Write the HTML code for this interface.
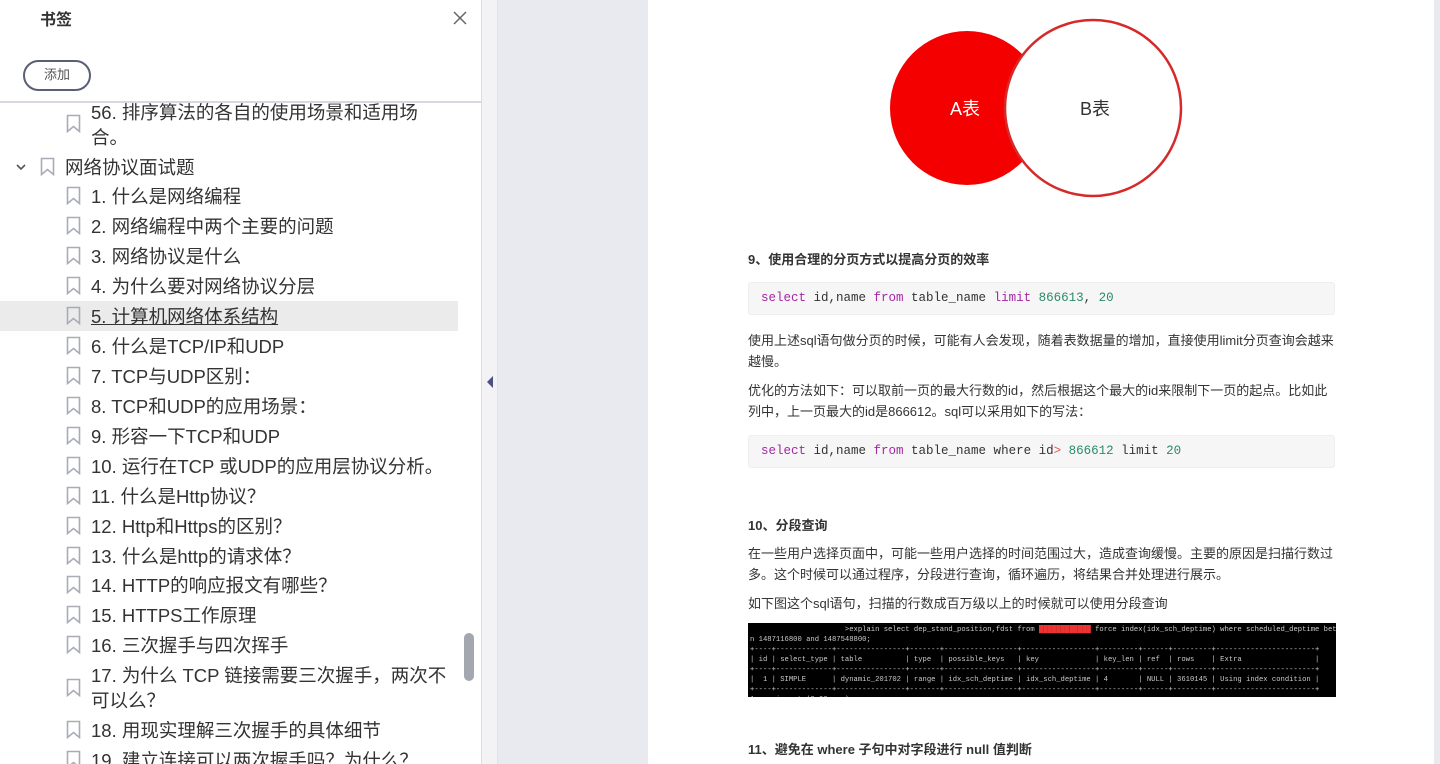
<!DOCTYPE html>
<html><head><meta charset="utf-8"><style>
*{margin:0;padding:0;box-sizing:border-box}
html,body{width:1440px;height:764px;overflow:hidden}
body{position:relative;background:#e9eaef;font-family:"Liberation Sans","Noto Sans CJK SC",sans-serif}
#side{position:absolute;left:0;top:0;width:482px;height:764px;background:#fff;border-right:1px solid #dcdce2}
#strip{position:absolute;left:482px;top:0;width:16px;height:764px;background:#f3f3f5;border-right:1px solid #e2e2e6}
.t{position:absolute;font-size:18.5px;color:#333;white-space:nowrap;line-height:25px}
.bm{position:absolute;width:15px;height:19px}
#page{position:absolute;left:648px;top:0;width:786px;height:764px;background:#fff}
.p{position:absolute;left:100px;font-size:13px;color:#333;line-height:21px}
.h{position:absolute;left:100px;font-size:13px;font-weight:bold;color:#333}
.code{position:absolute;left:100px;width:587px;height:33px;background:#f6f6f7;border:1px solid #eee;border-radius:3px;font-family:"Liberation Mono",monospace;font-size:12.5px;color:#333;padding-left:12px;line-height:31px}
.k{color:#a626a4}.n{color:#2a8a6a}
.term{position:absolute;left:100px;top:623px;width:588px;height:74px;background:#000;color:#ccc;font-family:"Liberation Mono",monospace;font-size:7.2px;line-height:10px;padding:2px 2px;white-space:pre;overflow:hidden}
</style></head><body>
<div id="side">
<div style="position:absolute;left:40px;top:6px;font-size:16px;font-weight:bold;color:#333">书签</div>
<svg style="position:absolute;left:453px;top:11px" width="14" height="14"><path d="M1 1L13 13M13 1L1 13" stroke="#666" stroke-width="1.5"/></svg>
<div style="position:absolute;left:23px;top:60px;width:68px;height:31px;border:2.5px solid #5a5f78;border-radius:16px;font-size:13px;color:#555;text-align:center;line-height:26px">添加</div>
<div style="position:absolute;left:0;top:101px;width:481px;height:2px;background:#d8d8e2"></div>
<div style="position:absolute;left:0;top:301px;width:458px;height:30px;background:#ebebeb"></div>
<div style="position:absolute;left:464px;top:633px;width:10px;height:48px;background:#a5a7b0;border-radius:5px"></div>
<svg style="position:absolute;left:15px;top:162px" width="12" height="10"><path d="M2 3 L6 7 L10 3" stroke="#555" stroke-width="1.6" fill="none"/></svg>
<div id="list"></div>
</div>
<div id="strip"><svg style="position:absolute;left:4px;top:375px" width="8" height="14"><path d="M7 1 L1 7 L7 13Z" fill="#4a5080"/></svg></div>
<div id="page">
<svg style="position:absolute;left:240px;top:15px" width="300" height="190">
<circle cx="79" cy="93" r="77" fill="#f50000"/>
<circle cx="205" cy="93" r="88" fill="#fff" stroke="#d62a2a" stroke-width="2.5"/>
<text x="62" y="100" font-size="18" fill="#fff" font-family="Liberation Sans,Noto Sans CJK SC,sans-serif">A表</text>
<text x="192" y="100" font-size="18" fill="#333" font-family="Liberation Sans,Noto Sans CJK SC,sans-serif">B表</text>
</svg>
<div class="h" style="top:249px">9、使用合理的分页方式以提高分页的效率</div>
<div class="code" style="top:282px"><span class="k">select</span> id,name <span class="k">from</span> table_name <span class="k">limit</span> <span class="n">866613</span>, <span class="n">20</span></div>
<div class="p" style="top:330px;width:590px">使用上述sql语句做分页的时候，可能有人会发现，随着表数据量的增加，直接使用limit分页查询会越来越慢。</div>
<div class="p" style="top:380px;width:590px">优化的方法如下：可以取前一页的最大行数的id，然后根据这个最大的id来限制下一页的起点。比如此列中，上一页最大的id是866612。sql可以采用如下的写法：</div>
<div class="code" style="top:435px"><span class="k">select</span> id,name <span class="k">from</span> table_name where id<span style="color:#e45649">&gt;</span> <span class="n">866612</span> limit <span class="n">20</span></div>
<div class="h" style="top:515px">10、分段查询</div>
<div class="p" style="top:543px;width:590px">在一些用户选择页面中，可能一些用户选择的时间范围过大，造成查询缓慢。主要的原因是扫描行数过多。这个时候可以通过程序，分段进行查询，循环遍历，将结果合并处理进行展示。</div>
<div class="p" style="top:593px">如下图这个sql语句，扫描的行数成百万级以上的时候就可以使用分段查询</div>
<div class="term">                      &gt;explain select dep_stand_position,fdst from <span style="color:#e33">████████████</span> force index(idx_sch_deptime) where scheduled_deptime betwee
n 1487116800 and 1487548800;
+----+-------------+----------------+-------+-----------------+-----------------+---------+------+---------+-----------------------+
| id | select_type | table          | type  | possible_keys   | key             | key_len | ref  | rows    | Extra                 |
+----+-------------+----------------+-------+-----------------+-----------------+---------+------+---------+-----------------------+
|  1 | SIMPLE      | dynamic_201702 | range | idx_sch_deptime | idx_sch_deptime | 4       | NULL | 3610145 | Using index condition |
+----+-------------+----------------+-------+-----------------+-----------------+---------+------+---------+-----------------------+
1 row in set (0.00 sec)</div>
<div class="h" style="top:739px">11、避免在 where 子句中对字段进行 null 值判断</div>
</div>
<script>
var items=[[112,"56. 排序算法的各自的使用场景和适用场",91,124],[137,"合。",91,-1],[167,"网络协议面试题",65,167],
[196,"1. 什么是网络编程"],[226,"2. 网络编程中两个主要的问题"],[256,"3. 网络协议是什么"],[286,"4. 为什么要对网络协议分层"],[316,"5. 计算机网络体系结构"],[346,"6. 什么是TCP/IP和UDP"],[376,"7. TCP与UDP区别："],[406,"8. TCP和UDP的应用场景："],[436,"9. 形容一下TCP和UDP"],[466,"10. 运行在TCP 或UDP的应用层协议分析。"],[496,"11. 什么是Http协议？"],[526,"12. Http和Https的区别？"],[556,"13. 什么是http的请求体？"],[585,"14. HTTP的响应报文有哪些？"],[615,"15. HTTPS工作原理"],[645,"16. 三次握手与四次挥手"],[675,"17. 为什么 TCP 链接需要三次握手，两次不",91,688],[700,"可以么？",91,-1],[730,"18. 用现实理解三次握手的具体细节"],[760,"19. 建立连接可以两次握手吗？为什么？"]];
var h="";
items.forEach(function(it){var x=it[2]||91,ic=it[3]===undefined?it[0]:it[3];
var u=it[1].indexOf("5. 计算")==0?";text-decoration:underline":"";
h+='<div class="t" style="left:'+x+'px;top:'+(it[0]-12)+'px'+u+'">'+it[1]+'</div>';
if(ic>0){var ix=x-25;h+='<svg class="bm" style="left:'+ix+'px;top:'+(ic-10)+'px" viewBox="0 0 15 19"><path d="M1.5 1.5H13.5V17.5L7.5 12.5L1.5 17.5Z" fill="none" stroke="#a9abb8" stroke-width="1.6"/></svg>';}});
document.getElementById("list").innerHTML=h;
</script>
</body></html>
